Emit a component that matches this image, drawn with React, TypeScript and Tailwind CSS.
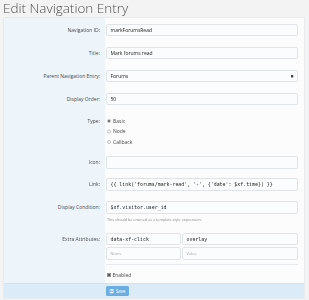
import React from "react";

// The reference is a half-size capture, so the form is laid out at 2x and scaled down.
const labelCol = "w-[202px] shrink-0 bg-[#edf4fa] text-right pr-[10px] text-[10px] text-[#4a4a4a]";
const inputBase =
  "min-w-0 rounded-[4px] border-2 border-[#e1e4e7] bg-[#fbfcfd] px-[7px] flex items-center text-[#222] whitespace-nowrap overflow-hidden";
const mono = { fontFamily: '"DejaVu Sans Mono", "Liberation Mono", monospace' };

function Row({
  label,
  children,
  className = "",
}: {
  label: string;
  children?: React.ReactNode;
  className?: string;
}) {
  return (
    <div className="flex">
      <div className={`${labelCol} pt-[12px]`}>
        <div className="h-[24px] leading-[24px]">{label}</div>
      </div>
      <div className={`flex-1 pl-[2px] pr-[12px] ${className}`}>{children}</div>
    </div>
  );
}

function Radio({ label, checked }: { label: string; checked?: boolean }) {
  return (
    <div className="flex items-center gap-[4px] h-[21px] text-[10px] text-[#4a4a4a]">
      <span className="w-[8px] h-[8px] rounded-full border-2 border-[#c2c2c2] bg-white flex items-center justify-center">
        {checked && <span className="w-[4px] h-[4px] rounded-full bg-[#555]" />}
      </span>
      <span>{label}</span>
    </div>
  );
}

export default function App() {
  return (
    <div className="w-[309px] h-[300px] bg-[#f3f3f3] overflow-hidden">
      <div
        className="w-[618px] origin-top-left scale-50"
        style={{ fontFamily: '"Open Sans", "Noto Sans", sans-serif' }}
      >
        <div className="h-[34px] pl-[6px] pt-[1px] text-[27px] leading-[30px] font-light text-[#505050]">
          Edit Navigation Entry
        </div>

        <div className="ml-[6px] w-[604px] bg-[#fcfcfc] border-2 border-[#e8eaec]">
          <Row label="Navigation ID:" className="pt-[12px] pb-[10px]">
            <div className={`${inputBase} w-full h-[24px] text-[10px]`}>markForumsRead</div>
          </Row>
          <Row label="Title:" className="pt-[12px] pb-[10px]">
            <div className={`${inputBase} w-full h-[24px] text-[10px]`}>Mark forums read</div>
          </Row>
          <Row label="Parent Navigation Entry:" className="pt-[12px] pb-[10px]">
            <div className={`${inputBase} w-full h-[24px] text-[10px] justify-between`}>
              <span>Forums</span>
              <span className="w-[5px] h-[5px] bg-[#444]" />
            </div>
          </Row>
          <Row label="Display Order:" className="pt-[12px] pb-[10px]">
            <div className={`${inputBase} w-full h-[24px] text-[10px]`}>50</div>
          </Row>
          <div className="flex">
            <div className={`${labelCol} pt-[11px]`}>
              <div className="h-[21px] leading-[21px]">Type:</div>
            </div>
            <div className="flex-1 pl-[4px] pt-[11px] pb-[6px]">
              <Radio label="Basic" checked />
              <Radio label="Node" />
              <Radio label="Callback" />
            </div>
          </div>
          <Row label="Icon:" className="pt-[12px] pb-[6px]">
            <div className={`${inputBase} w-full h-[26px]`} />
          </Row>
          <Row label="Link:" className="pt-[12px] pb-[8px]">
            <div className={`${inputBase} w-full h-[26px] text-[9.8px]`} style={mono}>
              {"{{ link('forums/mark-read', '-', {'date': $xf.time}) }}"}
            </div>
          </Row>
          <Row label="Display Condition:" className="pt-[12px] pb-[6px]">
            <div className={`${inputBase} w-full h-[26px] text-[9.8px]`} style={mono}>
              $xf.visitor.user_id
            </div>
            <div className="h-[20px] leading-[20px] text-[7.5px] text-[#8a8a8a] pl-[2px]">
              This should be entered as a template style expression.
            </div>
          </Row>
          <Row label="Extra Attributes:" className="pt-[12px] pb-[2px]">
            <div className="border-b-2 border-[#e8ebee] pb-[8px]">
              <div className="flex gap-[2px]">
                <div className={`${inputBase} w-[150px] shrink-0 h-[24px] text-[9.8px]`} style={mono}>
                  data-xf-click
                </div>
                <div className={`${inputBase} flex-1 h-[24px] text-[9.8px]`} style={mono}>
                  overlay
                </div>
              </div>
              <div className="flex gap-[2px] mt-[4px]">
                <div className={`${inputBase} w-[150px] shrink-0 h-[26px] text-[8px] text-[#aaa]`}>Name</div>
                <div className={`${inputBase} flex-1 h-[26px] text-[8px] text-[#aaa]`}>Value</div>
              </div>
            </div>
          </Row>
          <div className="flex">
            <div className={`${labelCol} h-[34px]`} />
            <div className="flex-1 pl-[4px] pt-[8px]">
              <div className="flex items-center gap-[3px] text-[10px] text-[#4a4a4a] h-[20px]">
                <span className="w-[8px] h-[8px] border-2 border-[#999] bg-white flex items-center justify-center">
                  <span className="w-[4px] h-[4px] bg-[#555]" />
                </span>
                <span>Enabled</span>
              </div>
            </div>
          </div>
          <div className="h-[30px] bg-[#dcebf8] border-t-2 border-[#d0e2f2] pl-[204px] pt-[4px]">
            <div className="w-[46px] h-[20px] rounded-[3px] bg-[#6aaee2] flex items-center justify-center gap-[4px] text-[9px] text-white">
              <svg width="9" height="9" viewBox="0 0 10 10">
                <rect x="0.6" y="0.6" width="8.8" height="8.8" rx="1" fill="none" stroke="white" strokeWidth="1.2" />
                <rect x="2.5" y="0.6" width="5" height="3" fill="white" />
                <rect x="2" y="6" width="6" height="3.4" fill="white" />
              </svg>
              <span>Save</span>
            </div>
          </div>
        </div>
      </div>
    </div>
  );
}
